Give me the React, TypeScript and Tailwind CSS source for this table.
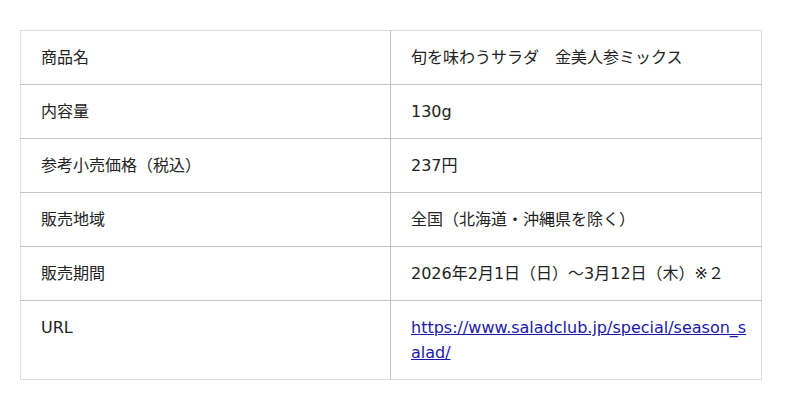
const rows: { label: string; value: React.ReactNode }[] = [
  { label: "商品名", value: "旬を味わうサラダ　金美人参ミックス" },
  { label: "内容量", value: "130g" },
  { label: "参考小売価格（税込）", value: "237円" },
  { label: "販売地域", value: "全国（北海道・沖縄県を除く）" },
  { label: "販売期間", value: "2026年2月1日（日）～3月12日（木）※２" },
  {
    label: "URL",
    value: (
      <a href="#" className="text-[#1a1aa6] underline break-all">
        https://www.saladclub.jp/special/season_salad/
      </a>
    ),
  },
];

export default function App() {
  return (
    <div className="w-[800px] h-[410px] bg-white pt-[30px] pl-[20px] font-['DejaVu_Sans','Noto_Sans_CJK_JP',sans-serif] text-[16px] leading-[25px] text-[#222]">
      <table className="w-[742px] table-fixed border-collapse border border-[#dcdcdc]">
        <tbody>
          {rows.map((row) => (
            <tr key={row.label} className="border-b border-[#c4c4c4] last:border-b-[#dcdcdc]">
              <td className="w-[370px] px-[20px] py-[14px] align-top border-r border-[#c4c4c4]">
                {row.label}
              </td>
              <td className="pl-[20px] pr-[10px] py-[14px] align-top">{row.value}</td>
            </tr>
          ))}
        </tbody>
      </table>
    </div>
  );
}
